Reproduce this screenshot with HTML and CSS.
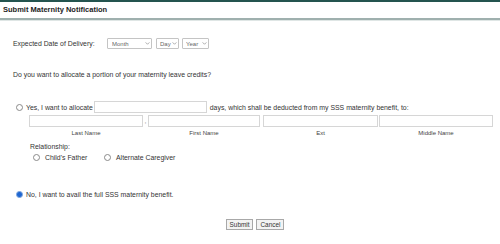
FILE: index.html
```html
<!DOCTYPE html>
<html lang="en">
<head>
    <meta charset="UTF-8">
    <meta name="viewport" content="width=device-width, initial-scale=1.0">
    <title>Submit Maternity Notification</title>
    <link rel="stylesheet" href="styles.css">
</head>
<body>
    <div class="topbar"></div>
    <h1 class="title">Submit Maternity Notification</h1>

    <form class="form">
        <div class="delivery">
            <label class="delivery-label">Expected Date of Delivery:</label>
            <span class="select select-month">
                <select><option>Month</option></select>
                <svg class="chevron" viewBox="0 0 6 4"><path d="M0.5 0.5 L3 3 L5.5 0.5" /></svg>
            </span>
            <span class="select select-day">
                <select><option>Day</option></select>
                <svg class="chevron" viewBox="0 0 6 4"><path d="M0.5 0.5 L3 3 L5.5 0.5" /></svg>
            </span>
            <span class="select select-year">
                <select><option>Year</option></select>
                <svg class="chevron" viewBox="0 0 6 4"><path d="M0.5 0.5 L3 3 L5.5 0.5" /></svg>
            </span>
        </div>

        <p class="question">Do you want to allocate a portion of your maternity leave credits?</p>

        <div class="option option-yes">
            <input type="radio" name="allocate" class="radio">
            <span>Yes, I want to allocate</span>
            <input type="text" class="field days">
            <span>days, which shall be deducted from my SSS maternity benefit, to:</span>
        </div>

        <div class="names">
            <div class="name-col col-last">
                <input type="text" class="field">
                <span class="name-label">Last Name</span>
            </div>
            <span class="comma">,</span>
            <div class="name-col col-first">
                <input type="text" class="field">
                <span class="name-label">First Name</span>
            </div>
            <div class="name-col col-ext">
                <input type="text" class="field">
                <span class="name-label">Ext</span>
            </div>
            <div class="name-col col-middle">
                <input type="text" class="field">
                <span class="name-label">Middle Name</span>
            </div>
        </div>

        <div class="relationship">
            <div class="relationship-label">Relationship:</div>
            <div class="relationship-options">
                <label class="rel-option"><input type="radio" name="relationship" class="radio"> Child's Father</label>
                <label class="rel-option"><input type="radio" name="relationship" class="radio"> Alternate Caregiver</label>
            </div>
        </div>

        <div class="option option-no">
            <input type="radio" name="allocate" class="radio" checked>
            <span>No, I want to avail the full SSS maternity benefit.</span>
        </div>

        <div class="actions">
            <button type="button" class="btn">Submit</button>
            <button type="button" class="btn">Cancel</button>
        </div>
    </form>
</body>
</html>
```

FILE: styles.css
```css
body {
    margin: 0;
    font-family: 'Liberation Sans', Arial, sans-serif;
    font-size: 6.9px;
    color: #333;
    background: #fff;
}

.topbar {
    height: 2px;
    background: #24544f;
}

.title {
    margin: 0;
    height: 16px;
    line-height: 16px;
    padding-left: 3px;
    font-size: 7.5px;
    font-weight: bold;
    color: #222;
    border-bottom: 2px solid #9fb0ae;
    box-shadow: 0 1px 0 #dfe6e5;
}

.form {
    padding-left: 13px;
}

.delivery {
    display: flex;
    align-items: center;
    margin-top: 18px;
    height: 11px;
}

.delivery-label {
    width: 94px;
}

.select {
    position: relative;
    display: inline-block;
    height: 11px;
    margin-right: 4px;
}

.select select {
    appearance: none;
    width: 100%;
    height: 100%;
    margin: 0;
    padding: 0 0 0 4px;
    border: 1px solid #c4c4c4;
    border-radius: 1px;
    background: #fff;
    font-family: inherit;
    font-size: 6px;
    color: #666;
    box-sizing: border-box;
}

.select-month { width: 45px; }
.select-day { width: 23px; margin-right: 3px; }
.select-year { width: 27px; }

.select-day select,
.select-year select {
    padding-left: 3px;
}

.chevron {
    position: absolute;
    right: 2px;
    top: 4px;
    width: 5px;
    height: 3px;
    fill: none;
    stroke: #777;
    stroke-width: 0.8;
}

.question {
    margin: 21px 0 0;
    line-height: 10px;
}

.option {
    display: flex;
    align-items: center;
    height: 12px;
    margin-left: 3px;
}

.option-yes {
    margin-top: 21px;
}

.radio {
    appearance: none;
    width: 7px;
    height: 7px;
    margin: 0 3px 0 0;
    border: 1px solid #8a8a8a;
    border-radius: 50%;
    background: #fff;
    box-sizing: border-box;
    flex: none;
}

.radio:checked {
    border-color: #5b8fd8;
    background: radial-gradient(circle, #1f66d1 0 2.2px, #9fc0ee 2.6px);
}

.field {
    height: 12px;
    margin: 0;
    padding: 0;
    border: 1px solid #d6d6d6;
    background: #fff;
    box-sizing: border-box;
}

.days {
    width: 113px;
    margin: 0 3px 0 1px;
}

.names {
    display: flex;
    margin: 2px 0 0 16px;
}

.name-col {
    display: flex;
    flex-direction: column;
    align-items: center;
}

.name-col .field {
    width: 100%;
}

.col-last { width: 114px; }
.col-first { width: 112px; margin-right: 3px; }
.col-ext { width: 115px; margin-right: 1px; }
.col-middle { width: 114px; }

.comma {
    width: 5px;
    text-align: center;
    line-height: 12px;
    color: #999;
}

.name-label {
    margin-top: 1px;
    line-height: 10px;
    font-size: 6px;
    color: #444;
}

.relationship {
    margin: 4px 0 0 17px;
}

.relationship-label {
    line-height: 10px;
}

.relationship-options {
    display: flex;
    align-items: center;
    margin-left: 3px;
    height: 10px;
}

.rel-option {
    display: flex;
    align-items: center;
    gap: 2px;
}

.rel-option:first-child {
    width: 71px;
}

.rel-option .radio {
    margin-right: 3px;
}

.option-no {
    margin-top: 26px;
}

.actions {
    display: flex;
    justify-content: center;
    gap: 3px;
    margin: 19px 0 0 -13px;
    padding-left: 10px;
}

.btn {
    height: 11px;
    margin: 0;
    padding: 0 3px;
    border: 1px solid #a8a8a8;
    background: #f3f3f3;
    font-family: inherit;
    font-size: 6.4px;
    color: #333;
    line-height: 9px;
}
```
